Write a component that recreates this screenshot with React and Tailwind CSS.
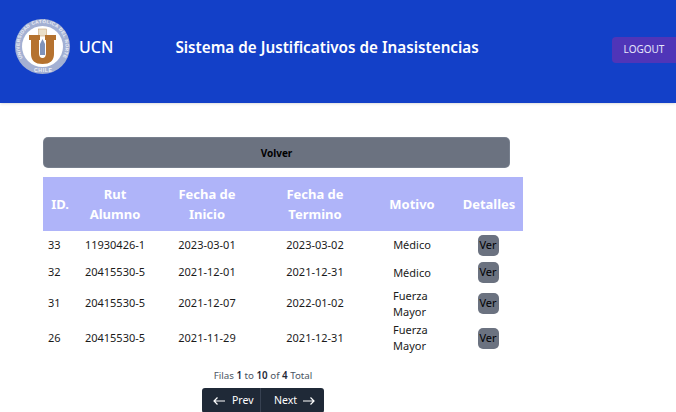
const rows = [
  { id: 33, rut: '11930426-1', inicio: '2023-03-01', termino: '2023-03-02', motivo: 'Médico', h: 'h-[28px]' },
  { id: 32, rut: '20415530-5', inicio: '2021-12-01', termino: '2021-12-31', motivo: 'Médico', h: 'h-[27px]' },
  { id: 31, rut: '20415530-5', inicio: '2021-12-07', termino: '2022-01-02', motivo: 'Fuerza Mayor', h: 'h-[35px]' },
  { id: 26, rut: '20415530-5', inicio: '2021-11-29', termino: '2021-12-31', motivo: 'Fuerza Mayor', h: 'h-[34px]' },
];

function Logo() {
  return (
    <svg width="56" height="56" viewBox="0 0 56 56" className="shrink-0">
      <defs>
        <path id="arcTop" d="M7.9 39 A23 23 0 1 1 47.1 39" />
      </defs>
      <circle cx="27.5" cy="27.5" r="27.5" fill="#a3b0d3" />
      <circle cx="27.5" cy="27.5" r="20.5" fill="#ffffff" />
      <text fontSize="4.7" fill="#eef1f8" fontWeight="600" fontFamily="'Liberation Sans', sans-serif">
        <textPath href="#arcTop" textLength="96">UNIVERSIDAD CATÓLICA DEL NORTE</textPath>
      </text>
      <text x="19" y="53" fontSize="5.2" textLength="18" fill="#eef1f8" fontWeight="700" fontFamily="'Liberation Sans', sans-serif">CHILE</text>
      <rect x="23.5" y="10" width="8" height="7" fill="#eadfca" stroke="#c9a679" strokeWidth="0.6" />
      <path d="M14 16 H25 V21 H24 V34 Q24 39 27.5 39 Q31 39 31 34 V21 H30 V16 H41 V21 H39 V35 Q39 45 27.5 45 Q16 45 16 35 V21 H14 Z" fill="#b5722f" />
      <path d="M27.5 20 L30 25 V36 H25 V25 Z" fill="#7f93bb" />
    </svg>
  );
}

function LongArrow({ flip }) {
  return (
    <svg width="12" height="10" viewBox="0 0 12 10" fill="none" stroke="currentColor" strokeWidth="1.2" className={flip ? 'rotate-180' : ''}>
      <path d="M12 5 H1 M4.5 1.5 L1 5 L4.5 8.5" />
    </svg>
  );
}

export default function App() {
  return (
    <div className="min-h-[412px] max-h-[412px] bg-white font-['Noto_Sans','Open_Sans',sans-serif] text-[11px] text-[#1b1b1b] overflow-hidden">
      <header className="h-[103px] bg-[#1340c8] shadow-sm flex items-center pl-[15px] pb-[9px]">
        <Logo />
        <span className="ml-[8px] text-[16px] leading-6 font-medium text-white">UCN</span>
        <h1 className="ml-[62px] w-[303px] whitespace-nowrap text-[15.25px] leading-6 font-semibold text-white">
          Sistema de Justificativos de Inasistencias
        </h1>
        <button className="ml-auto mt-[5px] h-[26px] w-[64px] rounded-l-[4px] bg-[#4f35b8] text-[10px] text-[#e6e6fa]">
          LOGOUT
        </button>
      </header>

      <main className="pl-[43px] pt-[34px]">
        <button className="w-[467px] h-[31px] pt-px rounded-[5px] bg-[#6b7280] text-[10px] font-bold text-black border border-gray-400/30">
          Volver
        </button>

        <table className="mt-[9px] w-[480px] table-fixed border-collapse">
          <thead>
            <tr className="h-[54px] bg-[#afb4f9] text-[13px] font-bold leading-5 text-white">
              <th className="w-[34px]">ID.</th>
              <th className="w-[76px] px-1">Rut Alumno</th>
              <th className="w-[108px] px-5">Fecha de Inicio</th>
              <th className="w-[108px] px-5">Fecha de Termino</th>
              <th className="w-[86px]">Motivo</th>
              <th className="w-[68px]">Detalles</th>
            </tr>
          </thead>
          <tbody>
            {rows.map((row) => (
              <tr key={row.id} className={row.h}>
                <td className="pl-[5px]">{row.id}</td>
                <td className="text-center">{row.rut}</td>
                <td className="text-center">{row.inicio}</td>
                <td className="text-center">{row.termino}</td>
                <td className="pl-[24px] pr-[20px] leading-4">
                  {row.motivo === 'Médico' ? <span className="block text-center pr-[4px]">{row.motivo}</span> : row.motivo}
                </td>
                <td className="text-center pr-[2px]">
                  <button className="h-[21px] w-[21px] rounded-[5px] bg-[#6b7280] text-[11px] text-black">Ver</button>
                </td>
              </tr>
            ))}
          </tbody>
        </table>

        <div className="mt-[13px] w-[440px] flex flex-col items-center">
          <p className="text-[9.75px] leading-4 text-[#4b5563]">
            Filas <b className="font-semibold text-[#1f2937]">1</b> to <b className="font-semibold text-[#1f2937]">10</b> of <b className="font-semibold text-[#1f2937]">4</b> Total
          </p>
          <div className="mt-[4px] flex h-[25px] w-[122px] rounded-[3px] bg-[#1f2937] text-[10.5px] text-white">
            <button className="w-[59px] flex items-center pl-[11px] gap-[7px] border-r border-[#374151]">
              <LongArrow />Prev
            </button>
            <button className="flex-1 flex items-center pl-[13px] gap-[6px]">
              Next<LongArrow flip />
            </button>
          </div>
        </div>
      </main>
    </div>
  );
}
